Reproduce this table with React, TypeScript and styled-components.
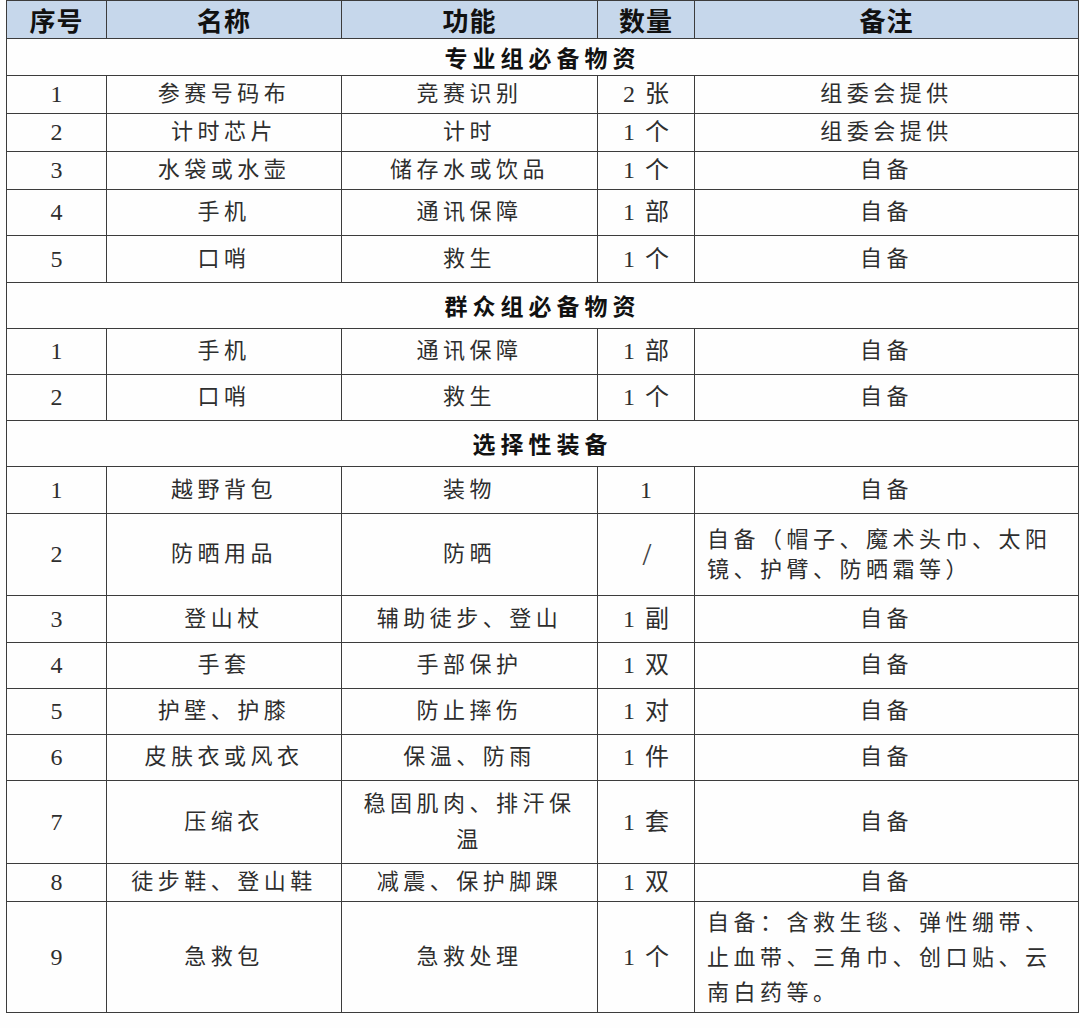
import React from 'react';
import styled, { createGlobalStyle } from 'styled-components';

const GlobalStyle = createGlobalStyle`
    html, body {
        margin: 0;
        padding: 0;
        background: #ffffff;
    }
`

const Page = styled.div`
    width: 1080px;
    height: 1028px;
    padding-left: 6px;
    box-sizing: border-box;
    background: #fefefe;
`

const Table = styled.table`
    width: 1072px;
    border-collapse: collapse;
    table-layout: fixed;
    font-family: "Liberation Serif", "Noto Sans CJK SC", serif;
    color: #2e2e2e;
`

const Row = styled.tr<{ h: number }>`
    height: ${({ h }) => h}px;
`

const HeadCell = styled.th`
    background: #c6d7eb;
    border: 1px solid #3c3c3c;
    font-family: "Noto Sans CJK SC", sans-serif;
    font-weight: 700;
    font-size: 26px;
    line-height: 1;
    color: #111;
    text-align: center;
    padding: 0;
    letter-spacing: 1px;
`

const SectionCell = styled.td`
    border: 1px solid #3c3c3c;
    font-family: "Noto Sans CJK SC", sans-serif;
    font-weight: 700;
    font-size: 23px;
    line-height: 1;
    color: #111;
    text-align: center;
    letter-spacing: 5px;
    padding: 0;
`

const Cell = styled.td<{ lh?: number; left?: boolean }>`
    border: 1px solid #3c3c3c;
    font-size: 22px;
    letter-spacing: 4.5px;
    text-align: ${({ left }) => left ? "left" : "center"};
    line-height: ${({ lh }) => lh ? `${lh}px` : "1.1"};
    padding: 0 12px;
    vertical-align: middle;
    word-break: break-all;
`

const NumCell = styled(Cell)`
    font-size: 24px;
    letter-spacing: 2px;
    padding: 0 10px 0 12px;
`

const Slash = styled.span`
    font-size: 32px;
    font-weight: 300;
    letter-spacing: 0;
    color: #444;
`

type Item = {
    no: string
    name: string
    func: string
    qty: string
    note: string
    h: number
    funcLh?: number
    noteLh?: number
    noteLeft?: boolean
}

type Section = {
    title: string
    h: number
    items: Item[]
}

const sections: Section[] = [
    {
        title: "专业组必备物资",
        h: 37,
        items: [
            { no: "1", name: "参赛号码布", func: "竞赛识别", qty: "2 张", note: "组委会提供", h: 38 },
            { no: "2", name: "计时芯片", func: "计时", qty: "1 个", note: "组委会提供", h: 38 },
            { no: "3", name: "水袋或水壶", func: "储存水或饮品", qty: "1 个", note: "自备", h: 38 },
            { no: "4", name: "手机", func: "通讯保障", qty: "1 部", note: "自备", h: 46 },
            { no: "5", name: "口哨", func: "救生", qty: "1 个", note: "自备", h: 47 },
        ]
    },
    {
        title: "群众组必备物资",
        h: 46,
        items: [
            { no: "1", name: "手机", func: "通讯保障", qty: "1 部", note: "自备", h: 46 },
            { no: "2", name: "口哨", func: "救生", qty: "1 个", note: "自备", h: 46 },
        ]
    },
    {
        title: "选择性装备",
        h: 46,
        items: [
            { no: "1", name: "越野背包", func: "装物", qty: "1", note: "自备", h: 47 },
            { no: "2", name: "防晒用品", func: "防晒", qty: "/", note: "自备（帽子、魔术头巾、太阳镜、护臂、防晒霜等）", h: 82, noteLh: 30, noteLeft: true },
            { no: "3", name: "登山杖", func: "辅助徒步、登山", qty: "1 副", note: "自备", h: 47 },
            { no: "4", name: "手套", func: "手部保护", qty: "1 双", note: "自备", h: 46 },
            { no: "5", name: "护壁、护膝", func: "防止摔伤", qty: "1 对", note: "自备", h: 46 },
            { no: "6", name: "皮肤衣或风衣", func: "保温、防雨", qty: "1 件", note: "自备", h: 46 },
            { no: "7", name: "压缩衣", func: "稳固肌肉、排汗保温", qty: "1 套", note: "自备", h: 83, funcLh: 36 },
            { no: "8", name: "徒步鞋、登山鞋", func: "减震、保护脚踝", qty: "1 双", note: "自备", h: 38 },
            { no: "9", name: "急救包", func: "急救处理", qty: "1 个", note: "自备：含救生毯、弹性绷带、止血带、三角巾、创口贴、云南白药等。", h: 111, noteLh: 35, noteLeft: true },
        ]
    }
]

export default function App() {
    return (
        <Page>
            <GlobalStyle />
            <Table>
                <colgroup>
                    <col style={{ width: 100 }} />
                    <col style={{ width: 235 }} />
                    <col style={{ width: 256 }} />
                    <col style={{ width: 97 }} />
                    <col style={{ width: 384 }} />
                </colgroup>
                <tbody>
                    <Row h={38}>
                        <HeadCell>序号</HeadCell>
                        <HeadCell>名称</HeadCell>
                        <HeadCell>功能</HeadCell>
                        <HeadCell>数量</HeadCell>
                        <HeadCell>备注</HeadCell>
                    </Row>
                    {sections.map((s) => (
                        <React.Fragment key={s.title}>
                            <Row h={s.h}>
                                <SectionCell colSpan={5}>{s.title}</SectionCell>
                            </Row>
                            {s.items.map((i) => (
                                <Row h={i.h} key={s.title + i.no}>
                                    <NumCell>{i.no}</NumCell>
                                    <Cell>{i.name}</Cell>
                                    <Cell lh={i.funcLh}>{i.func}</Cell>
                                    <NumCell>{i.qty === "/" ? <Slash>/</Slash> : i.qty}</NumCell>
                                    <Cell lh={i.noteLh} left={i.noteLeft}>{i.note}</Cell>
                                </Row>
                            ))}
                        </React.Fragment>
                    ))}
                </tbody>
            </Table>
        </Page>
    )
}
